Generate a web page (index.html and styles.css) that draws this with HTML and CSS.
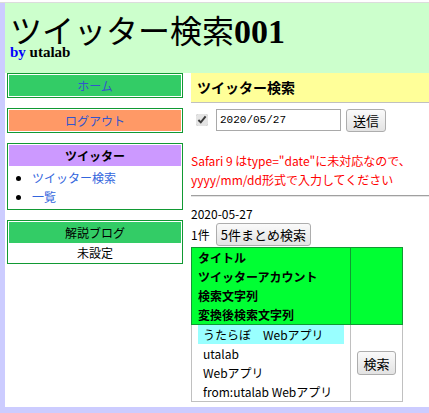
FILE: index.html
```html
<!DOCTYPE html>
<html lang="ja">
<head>
  <meta charset="UTF-8" />
  <meta name="viewport" content="width=device-width, initial-scale=1" />
  <title>ツイッター検索001</title>
  <link rel="stylesheet" href="styles.css">
</head>
<body>
  <div class="topline"></div>
  <div class="page">
    <div class="header">
      <h1 class="site-title">ツイッター検索<span class="num">001</span></h1>
      <div class="byline"><a href="#">by</a> utalab</div>
    </div>

    <div class="layout">
      <div class="sidebar">
        <div class="side-box">
          <div class="side-head home"><a href="#">ホーム</a></div>
        </div>
        <div class="side-box">
          <div class="side-head logout"><a href="#">ログアウト</a></div>
        </div>
        <div class="side-box">
          <div class="side-head twitter">ツイッター</div>
          <ul class="side-list">
            <li><a href="#">ツイッター検索</a></li>
            <li><a href="#">一覧</a></li>
          </ul>
        </div>
        <div class="side-box">
          <div class="side-head blog">解説ブログ</div>
          <div class="side-body">未設定</div>
        </div>
      </div>

      <div class="main">
        <div class="main-title">ツイッター検索</div>

        <form class="search-form" onsubmit="return false;">
          <input type="checkbox" class="check" checked />
          <input type="text" class="date-input" value="2020/05/27" />
          <button type="submit" class="btn">送信</button>
        </form>

        <p class="notice">Safari 9 はtype="date"に未対応なので、<br />yyyy/mm/dd形式で入力してください</p>

        <hr class="rule" />

        <div class="line">2020-05-27</div>
        <div class="count">1件 <button class="btn">5件まとめ検索</button></div>

        <table class="result">
          <tr class="head">
            <th>タイトル<br />ツイッターアカウント<br />検索文字列<br />変換後検索文字列</th>
            <th></th>
          </tr>
          <tr>
            <td>
              <div class="item title">うたらぼ　Webアプリ</div>
              <div class="item">utalab</div>
              <div class="item">Webアプリ</div>
              <div class="item">from:utalab Webアプリ</div>
            </td>
            <td class="action"><button class="btn">検索</button></td>
          </tr>
        </table>
      </div>
    </div>
  </div>
</body>
</html>
```

FILE: styles.css
```css
html, body {
  margin: 0;
  padding: 0;
}

body {
  background: #ccccff;
  font-family: "Noto Sans CJK JP", sans-serif;
  font-size: 12px;
  line-height: 19px;
  color: #000;
  overflow: hidden;
}

a {
  color: #3366dd;
  text-decoration: none;
}

.topline {
  height: 2px;
  background: #fff;
  border-bottom: 1px solid #dcdcdc;
}

.page {
  margin-left: 5px;
  background: #fff;
  height: 404px;
}

/* header */
.header {
  background: #ccffcc;
  height: 70px;
  padding: 0 5px;
}

.site-title {
  margin: 0;
  padding-top: 18px;
  font-family: "Liberation Serif", "Noto Sans CJK JP", serif;
  font-size: 32px;
  line-height: 22px;
  font-weight: normal;
}

.site-title .num {
  font-size: 34px;
  font-weight: bold;
}

.byline {
  font-family: "Liberation Serif", serif;
  font-size: 15px;
  font-weight: bold;
  line-height: 18px;
}

.byline a {
  color: #0000ff;
}

/* layout */
.layout {
  display: flex;
  gap: 8px;
}

.sidebar {
  width: 176px;
  margin-left: 2px;
  flex-shrink: 0;
  display: flex;
  flex-direction: column;
  gap: 10px;
}

.side-box {
  border: 1px solid #119933;
  padding: 1px;
}

.side-head {
  height: 21px;
  line-height: 21px;
  text-align: center;
}

.side-head a {
  color: #3355cc;
}

.side-head.home {
  background: #33cc66;
}

.side-head.logout {
  background: #ff9966;
}

.side-head.twitter {
  background: #cc99ff;
  font-weight: bold;
}

.side-head.blog {
  background: #33cc66;
}

.side-list {
  margin: 0;
  padding: 2px 0 2px 23px;
}

.side-body {
  text-align: center;
}

/* main */
.main {
  flex: 1;
  min-width: 0;
}

.main-title {
  background: #ffff99;
  height: 29px;
  line-height: 29px;
  padding-left: 6px;
  font-size: 14px;
  font-weight: bold;
  border-bottom: 1px solid #c0c0c0;
}

.search-form {
  display: flex;
  align-items: center;
  margin: 5px 0 0;
  height: 24px;
}

.check {
  margin: 0 8px 0 5px;
  width: 12px;
  height: 12px;
  accent-color: #e4e4e4;
}

.date-input {
  width: 117px;
  height: 20px;
  padding: 0 3px;
  border: 1px solid #a9a9a9;
  font-family: "Liberation Mono", monospace;
  font-size: 11px;
  margin-right: 5px;
}

.btn {
  height: 23px;
  padding: 0 6px;
  font-family: "Noto Sans CJK JP", sans-serif;
  font-size: 13px;
  color: #000;
  background: linear-gradient(#fafafa, #e3e3e3);
  border: 1px solid #adadad;
  border-radius: 3px;
  white-space: nowrap;
}

.notice {
  color: #ff0000;
  margin: 19px 0 0;
}

.rule {
  margin: 6px 0 7px;
  border: none;
  border-top: 1px solid #a0a0a0;
  border-bottom: 1px solid #e4e4e4;
}

.count {
  display: flex;
  align-items: center;
  gap: 6px;
}

.count .btn {
  padding: 0 4px;
}

.result {
  border-collapse: collapse;
  width: 212px;
  margin-top: 1px;
}

.result th {
  background: #00ff33;
  border: 1px solid #119933;
  text-align: left;
  padding: 0 6px;
  line-height: 19px;
}

.result th:last-child {
  width: 39px;
}

.result td {
  border: 1px solid #c0c0c0;
  padding: 0 6px;
  vertical-align: middle;
}

.item {
  padding-left: 5px;
}

.item.title {
  background: #99ffff;
}

.result td.action {
  text-align: center;
  padding: 0 4px;
}

.action .btn {
  height: 24px;
  padding: 0 5px;
}
```
